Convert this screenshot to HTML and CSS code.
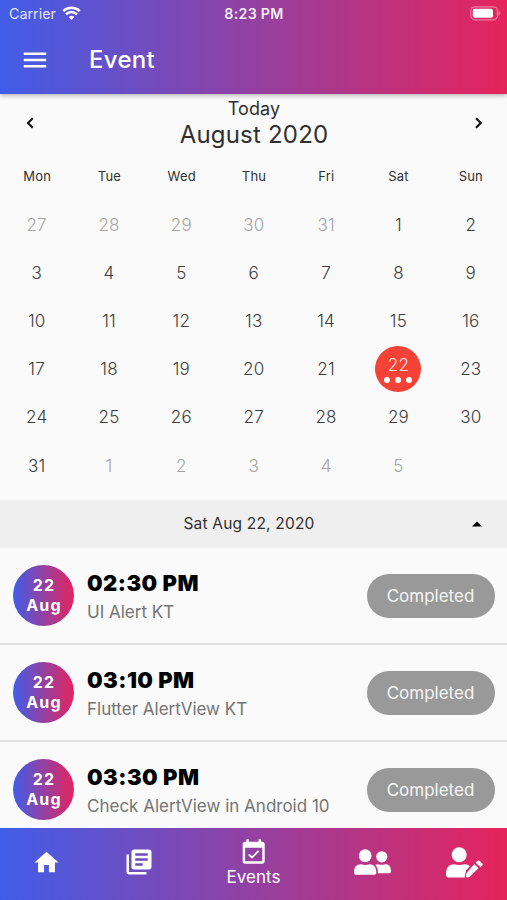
FILE: index.html
```html
<!DOCTYPE html>
<html lang="en">
<head>
<meta charset="utf-8">
<title>Event</title>
<link rel="stylesheet" href="styles.css">
</head>
<body>
<div class="app">
  <header class="header">
    <div class="status">
      <div class="carrier"><span>Carrier</span>
        <svg width="19" height="15" viewBox="0 0 19 15"><path d="M1.2 5.200a11.900 11.900 0 0 1 16.600 0M4 8.300a7.900 7.900 0 0 1 11 0" fill="none" stroke="#fff" stroke-width="2.500"/><path d="M9.500 14L6.600 11a4.300 4.300 0 0 1 5.800 0z" fill="#fff"/></svg>
      </div>
      <span class="clock">8:23 PM</span>
      <svg class="battery" width="31" height="15" viewBox="0 0 31 15"><rect x=".8" y=".8" width="26.6" height="13" rx="4" fill="none" stroke="#fff" stroke-opacity=".4" stroke-width="1.2"/><rect x="2.8" y="2.8" width="20.2" height="9" rx="2" fill="#fff"/><path d="M28.6 5v4.6c2.3-.9 2.3-3.7 0-4.6z" fill="#fff" fill-opacity=".45"/></svg>
    </div>
    <div class="toolbar">
      <svg width="30" height="30" viewBox="0 0 24 24" fill="#fff"><path d="M3 18h18v-2H3v2zm0-5h18v-2H3v2zm0-7v2h18V6H3z"/></svg>
      <h1>Event</h1>
    </div>
  </header>
  <main class="content">
    <section class="month">
      <svg class="arrow" width="30" height="30" viewBox="0 0 24 24"><path d="M14.200 8.200L10.400 12l3.800 3.800"/></svg>
      <div class="month-title"><span class="today">Today</span><span class="name">August 2020</span></div>
      <svg class="arrow" width="30" height="30" viewBox="0 0 24 24"><path d="M10.400 8.200l3.800 3.800-3.800 3.800"/></svg>
    </section>
    <div class="weekdays"><span>Mon</span><span>Tue</span><span>Wed</span><span>Thu</span><span>Fri</span><span>Sat</span><span>Sun</span></div>
    <div class="days">
      <span class="out">27</span><span class="out">28</span><span class="out">29</span><span class="out">30</span><span class="out">31</span><span>1</span><span>2</span>
      <span>3</span><span>4</span><span>5</span><span>6</span><span>7</span><span>8</span><span>9</span>
      <span>10</span><span>11</span><span>12</span><span>13</span><span>14</span><span>15</span><span>16</span>
      <span>17</span><span>18</span><span>19</span><span>20</span><span>21</span><div class="selected"><b>22</b><div class="dots"><i></i><i></i><i></i></div></div><span>23</span>
      <span>24</span><span>25</span><span>26</span><span>27</span><span>28</span><span>29</span><span>30</span>
      <span>31</span><span class="out">1</span><span class="out">2</span><span class="out">3</span><span class="out">4</span><span class="out">5</span>
    </div>
    <div class="datebar"><span></span><span class="date">Sat Aug 22, 2020</span><svg width="12" height="6" viewBox="0 0 12 6"><path d="M1 5.6L6 .4l5 5.2z"/></svg></div>
    <article class="event"><div class="badge"><span>22</span><span>Aug</span></div><div class="info"><h2>02:30 PM</h2><p>UI Alert KT</p></div><span class="chip">Completed</span></article>
    <article class="event"><div class="badge"><span>22</span><span>Aug</span></div><div class="info"><h2>03:10 PM</h2><p>Flutter AlertView KT</p></div><span class="chip">Completed</span></article>
    <article class="event"><div class="badge"><span>22</span><span>Aug</span></div><div class="info"><h2>03:30 PM</h2><p>Check AlertView in Android 10</p></div><span class="chip">Completed</span></article>
  </main>
  <nav class="nav">
    <a class="home"><svg width="29" height="29" viewBox="0 0 24 24"><path d="M10 20v-6h4v6h5v-8h3L12 3 2 12h3v8z"/></svg></a>
    <a class="library"><svg width="30" height="30" viewBox="0 0 24 24"><path d="M4 6H2v14c0 1.1.9 2 2 2h14v-2H4V6zm16-4H8c-1.1 0-2 .9-2 2v12c0 1.1.9 2 2 2h12c1.1 0 2-.9 2-2V4c0-1.1-.9-2-2-2zm-1 9H9V9h10v2zm-4 4H9v-2h6v2zm4-8H9V5h10v2z"/></svg></a>
    <a class="active"><svg width="29.4" height="29.4" viewBox="0 0 24 24"><path d="M16.53 11.06L15.47 10l-4.88 4.88-2.12-2.12-1.06 1.06L10.59 17l5.94-5.94zM19 3h-1V1h-2v2H8V1H6v2H5c-1.11 0-1.99.9-1.99 2L3 19c0 1.1.89 2 2 2h14c1.1 0 2-.9 2-2V5c0-1.1-.9-2-2-2zm0 16H5V8h14v11z"/></svg><span>Events</span></a>
    <a class="people"><svg width="37" height="26" viewBox="0 0 37 26"><circle cx="11.2" cy="6.7" r="6.4"/><path d="M0 23.5C0 18 2.5 15.2 7 15.2c2.7.9 5.700.9 8.400 0 4.500 0 6.900 2.800 6.900 8.300 0 1.500-.8 2.300-2.300 2.300H2.300C.8 25.800 0 25 0 23.500z"/><circle cx="27.800" cy="7.800" r="5.600"/><path d="M21.200 15.800c.8-.4 1.700-.6 3-.6 2.300.8 4.900.8 7.200 0 3.700 0 5.600 2.600 5.600 7 0 1.400-.7 2.100-2 2.100H23.700c.5-3.600-.4-6.500-2.500-8.500z"/></svg></a>
    <a class="edit"><svg width="37" height="31" viewBox="0 0 37 31"><circle cx="13.200" cy="7.700" r="7.500"/><path d="M0 27.500C0 20.500 2.800 17.200 8.200 17.200c3.200 1.100 6.800 1.100 10 0 2.500 0 4.200.6 5.600 2L20 23.600l-1.300 6.800H2.600C.9 30.400 0 29.400 0 27.500z"/><path d="M28.300 17.600l3.700 3.500-8.200 8.300-3.300.6.500-3.900z" stroke="#fff" stroke-linejoin="round"/><path d="M29.700 15.800l1.600-1.700c.8-.8 1.700-.8 2.500-.1l2.300 2.200c.8.800.8 1.700.1 2.400l-1.800 1.700z"/></svg></a>
  </nav>
</div>
</body>
</html>
```
FILE: styles.css
```css
* { box-sizing: border-box; }
body { margin: 0; background: #fafafa; font-family: Inter, "Liberation Sans", sans-serif; color: #303030; }
h1, h2, p { margin: 0; }
svg { display: block; flex: none; }
.app { width: 507px; height: 900px; display: flex; flex-direction: column; overflow: hidden; }
.header, .nav, .badge { background: linear-gradient(90deg, #415de8, #e6245c); color: #fff; }
.header { height: 94px; flex: none; box-shadow: 0 1px 5px rgba(0,0,0,.35); z-index: 1; }
.status { height: 27px; display: grid; grid-template-columns: 1fr auto 1fr; align-items: center; padding: 0 6px 0 9px; }
.carrier { display: flex; align-items: center; gap: 6px; font-size: 14.3px; color: rgba(255,255,255,.85); }
.clock { font-size: 14.2px; font-weight: 600; letter-spacing: .3px; margin-right: 2px; color: rgba(255,255,255,.92); }
.battery { justify-self: end; }
.toolbar { height: 65px; display: flex; align-items: center; gap: 39px; padding-left: 20px; }
.toolbar h1 { font-size: 24px; font-weight: 500; letter-spacing: .3px; }
.content { flex: 1; min-height: 0; overflow: hidden; }
.month { height: 56px; display: flex; justify-content: space-between; align-items: center; padding: 2px 14px 0 15px; }
.arrow { fill: none; stroke: #111; stroke-width: 1.7; }
.month-title { display: flex; flex-direction: column; align-items: center; }
.today { font-size: 18px; line-height: 24px; letter-spacing: .1px; }
.name { font-size: 24px; line-height: 28px; letter-spacing: .2px; }
.weekdays, .days { display: grid; grid-template-columns: repeat(7, 1fr); text-align: center; }
.weekdays { height: 50px; line-height: 53px; font-size: 13px; letter-spacing: .2px; padding-left: 1px; }
.days { height: 299.5px; grid-auto-rows: 48.2px; align-items: center; font-size: 17px; font-weight: 350; padding: .5px 0 0 .5px; letter-spacing: .2px; color: #3c3c3c; }
.days .out { color: #a5a5a5; }
.selected { justify-self: center; width: 46px; height: 46px; border-radius: 50%; background: #f44336; color: #ffe5e2; display: flex; flex-direction: column; align-items: center; padding-top: 9px; }
.selected b { font-weight: 300; line-height: 20px; }
.dots { display: flex; gap: 5px; margin-top: 2px; }
.dots i { width: 6px; height: 6px; border-radius: 50%; background: #fff; }
.datebar { height: 48.5px; background: #efefef; display: grid; grid-template-columns: 1fr auto 1fr; align-items: center; padding: 0 24px; }
.date { font-size: 15.5px; letter-spacing: .2px; margin-right: 9px; }
.datebar svg { justify-self: end; }
.event { height: 97.2px; display: flex; align-items: center; border-bottom: 2px solid #e0e0e0; padding: 0 12.5px 0 13px; }
.badge { width: 61px; height: 61px; border-radius: 50%; display: flex; flex-direction: column; align-items: center; justify-content: center; font-size: 16px; line-height: 19.5px; font-weight: 700; letter-spacing: 1.2px; padding-left: 1px; }
.info { flex: 1; padding: 3px 0 0 13px; }
.info h2 { font-size: 22px; line-height: 29px; font-weight: 900; letter-spacing: .45px; color: #000; }
.info p { font-size: 17px; line-height: 28px; color: #757575; font-weight: 400; }
.chip { width: 128px; height: 44px; border-radius: 22px; background: #999; color: #f5f5f5; font-size: 17px; line-height: 44px; text-align: center; }
.nav { height: 72px; flex: none; display: grid; grid-template-columns: 93px 92px 137px 100px 85px; fill: #fff; }
.nav a { display: flex; justify-content: center; }
.home { padding-top: 19.5px; }
.library { padding-top: 19px; }
.people { padding-top: 21px; }
.edit { padding-top: 19px; }
.nav .active { flex-direction: column; align-items: center; justify-content: flex-start; padding-top: 9.5px; font-size: 17px; line-height: 20px; }
```
